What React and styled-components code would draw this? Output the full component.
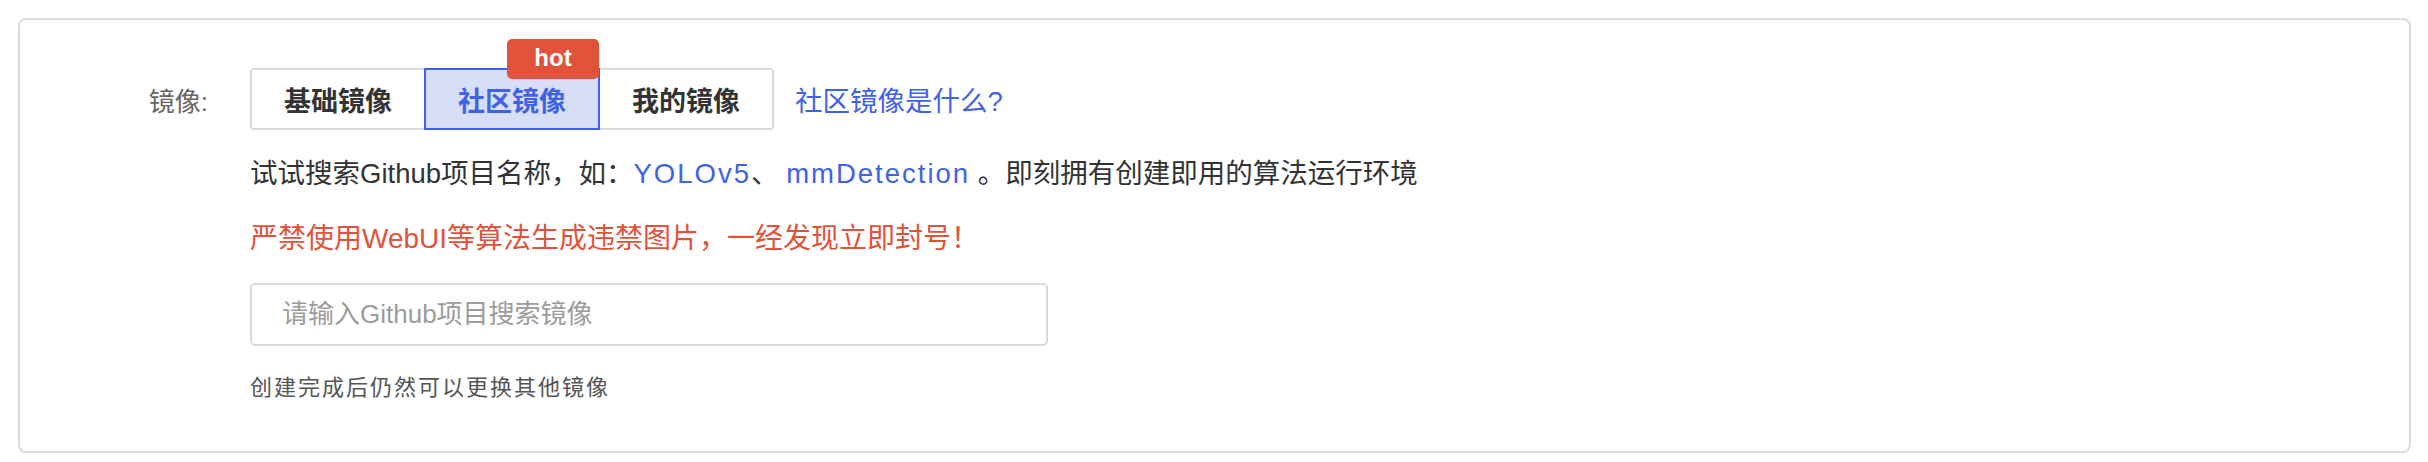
import React from "react"
import styled, { createGlobalStyle } from "styled-components"

const GlobalStyle = createGlobalStyle`
  body {
    margin: 0;
    background: #ffffff;
    font-family: "Liberation Sans", "Noto Sans CJK SC", sans-serif;
  }
`

const Card = styled.div`
  margin: 18px 17px 0 18px;
  height: 435px;
  box-sizing: border-box;
  border: 2px solid #dcdce2;
  border-radius: 8px;
  background: #fff;
  padding-top: 48px;
`

const FormRow = styled.div`
  display: grid;
  grid-template-columns: 188px 1fr;
  column-gap: 42px;
`

const Label = styled.div`
  height: 62px;
  display: flex;
  align-items: center;
  justify-content: flex-end;
  font-size: 26px;
  color: #666;
`

const Content = styled.div`
  display: flex;
  flex-direction: column;
  align-items: flex-start;
`

const TabRow = styled.div`
  display: flex;
  align-items: center;
`

const TabGroup = styled.div`
  display: flex;
`

const Tab = styled.button`
  position: relative;
  width: 176px;
  height: 62px;
  box-sizing: border-box;
  margin: 0 0 0 -2px;
  padding: 0;
  border: 2px solid ${(p) => (p.$active ? "#3f62e6" : "#dadae0")};
  background: ${(p) => (p.$active ? "#d7dff8" : "#fff")};
  color: ${(p) => (p.$active ? "#3f62e6" : "#333")};
  z-index: ${(p) => (p.$active ? 1 : 0)};
  font-family: "Liberation Sans", "Noto Sans CJK SC", sans-serif;
  font-size: 27px;
  font-weight: 700;
  cursor: pointer;

  &:first-child {
    margin-left: 0;
    border-radius: 4px 0 0 4px;
  }
  &:last-child {
    border-radius: 0 4px 4px 0;
  }
`

const HotBadge = styled.span`
  position: absolute;
  top: -31px;
  right: -1px;
  width: 92px;
  height: 40px;
  border-radius: 5px;
  background: #e0533a;
  color: #fff;
  font-family: "Liberation Sans", sans-serif;
  font-size: 24px;
  font-weight: 700;
  line-height: 38px;
  text-align: center;
`

const HelpLink = styled.a`
  margin-left: 21px;
  font-size: 27.5px;
  color: #3f62e6;
  text-decoration: none;
`

const Hint = styled.p`
  margin: 24px 0 0;
  line-height: 40px;
  font-size: 27.5px;
  color: #333;
  white-space: nowrap;
`

const Example = styled.a`
  color: #3f62e6;
  letter-spacing: 2px;
  text-decoration: none;
`

const Warning = styled.p`
  margin: 25px 0 0;
  line-height: 40px;
  font-size: 28px;
  color: #e0533a;
`

const SearchInput = styled.input`
  margin-top: 24px;
  width: 798px;
  height: 63px;
  box-sizing: border-box;
  border: 2px solid #d9d9de;
  border-radius: 5px;
  padding: 0 30px;
  font-family: "Liberation Sans", "Noto Sans CJK SC", sans-serif;
  font-size: 26px;
  color: #333;
  outline: none;

  &::placeholder {
    color: #9c9c9c;
  }
`

const Note = styled.p`
  margin: 27px 0 0;
  line-height: 30px;
  font-size: 22px;
  letter-spacing: 2px;
  color: #555;
`

export default function App() {
  return (
    <>
      <GlobalStyle />
      <Card>
        <FormRow>
          <Label>镜像:</Label>
          <Content>
            <TabRow>
              <TabGroup>
                <Tab>基础镜像</Tab>
                <Tab $active>
                  社区镜像
                  <HotBadge>hot</HotBadge>
                </Tab>
                <Tab>我的镜像</Tab>
              </TabGroup>
              <HelpLink href="#">社区镜像是什么?</HelpLink>
            </TabRow>
            <Hint>
              试试搜索Github项目名称，如：<Example href="#">YOLOv5</Example>、 <Example href="#">mmDetection</Example> 。即刻拥有创建即用的算法运行环境
            </Hint>
            <Warning>严禁使用WebUI等算法生成违禁图片，一经发现立即封号！</Warning>
            <SearchInput placeholder="请输入Github项目搜索镜像" />
            <Note>创建完成后仍然可以更换其他镜像</Note>
          </Content>
        </FormRow>
      </Card>
    </>
  )
}
